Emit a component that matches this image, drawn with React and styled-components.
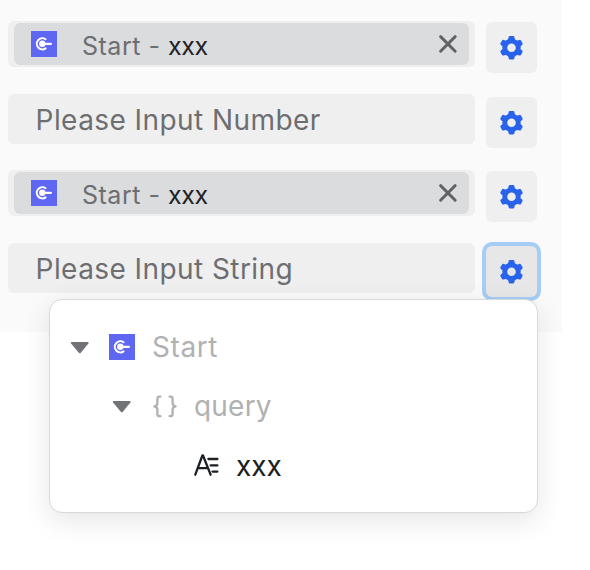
import React from "react";
import styled, { createGlobalStyle } from "styled-components";

const GlobalStyle = createGlobalStyle`
  * { box-sizing: border-box; }
  body {
    margin: 0;
    background: #fff;
    font-family: Inter, "Liberation Sans", sans-serif;
    overflow: hidden;
  }
`;

const Page = styled.main`
  position: relative;
  width: 590px;
  height: 570px;
  overflow: hidden;
`;

const Panel = styled.section`
  width: 562px;
  height: 332px;
  padding: 21px 0 0 8px;
  background: #fafafa;
`;

const Row = styled.div`
  display: flex;
  align-items: flex-start;
  gap: 11px;
  height: ${(p) => (p.$compact ? 73 : 76)}px;
`;

const Field = styled.div`
  display: flex;
  align-items: center;
  width: 467px;
  height: ${(p) => (p.$compact ? 46 : 50)}px;
  padding: ${(p) => (p.$compact ? "0 6px" : "2px 27.6px 0")};
  border-radius: 6px;
  background: #efefef;
`;

const Placeholder = styled.span`
  font-size: 28px;
  line-height: 48px;
  letter-spacing: 0.43px;
  color: #6d6e71;
  white-space: pre;
`;

const Tag = styled.div`
  display: flex;
  align-items: center;
  width: 455px;
  height: 42px;
  padding: 0 11px 0 17px;
  border-radius: 6px;
  background: #dbdcde;
`;

const TagText = styled.span`
  flex: 1;
  margin-left: 25px;
  padding-top: 3px;
  font-size: 25px;
  line-height: 40px;
  letter-spacing: 0.5px;
  color: #6d6e71;
  white-space: pre;
`;

const Strong = styled.span`
  letter-spacing: -0.4px;
  color: #1f2226;
`;

const SettingsButton = styled.button`
  display: flex;
  align-items: center;
  justify-content: center;
  width: 51px;
  height: 51px;
  margin: ${(p) => p.$offset}px 0 0;
  padding: 0;
  border: 0;
  border-radius: 6px;
  background: ${(p) => (p.$active ? "#e7e7e7" : "#efefef")};
  box-shadow: ${(p) => (p.$active ? "0 0 0 4px #a6cdf5" : "none")};
`;

const Popup = styled.div`
  position: absolute;
  left: 49px;
  top: 299px;
  width: 489px;
  height: 214px;
  padding: 17px 0 0 20px;
  border: 1px solid #d9d9d9;
  border-radius: 13px;
  background: #fff;
  box-shadow: 0 8px 28px rgba(0, 0, 0, 0.1);
`;

const TreeRow = styled.div`
  display: flex;
  align-items: center;
  height: 59.5px;
  padding-left: ${(p) => p.$indent}px;
`;

const TreeLabel = styled.span`
  margin-left: 17px;
  font-size: 28px;
  line-height: 40px;
  letter-spacing: ${(p) => p.$tracking}px;
  color: ${(p) => (p.$dark ? "#1c1f23" : "#b0b1b2")};
`;

const Glyph = styled.svg`
  display: block;
  flex: none;
  margin-left: ${(p) => p.$gap || 0}px;
`;

function StartIcon({ gap }) {
  return (
    <Glyph $gap={gap} width="26" height="26" viewBox="0 0 26 26">
      <path fill="#5f66f2" d="M0 0h26v26H0z" />
      <path d="M14.6 8.2A5.6 5.6 0 1 0 14.6 17.4" fill="none" stroke="#fff" strokeWidth="2" strokeLinecap="round" />
      <circle cx="11.3" cy="12.8" r="3.2" fill="#fff" />
      <path d="M12 12.8h7.9" stroke="#fff" strokeWidth="2.2" strokeLinecap="round" />
    </Glyph>
  );
}

function GearIcon() {
  return (
    <Glyph width="24" height="24" viewBox="-11.5 -11.7 24 24">
      <circle r="6.5" fill="none" stroke="#2963eb" strokeWidth="4.4" />
      {[0, 60, 120, 180, 240, 300].map((angle) => (
        <path
          key={angle}
          transform={`rotate(${angle})`}
          fill="#2963eb"
          d="M-5-7.5Q-3.5-7.9-3.2-9L-2.9-10.6Q-2.6-11.8-1.5-11.8H1.5Q2.6-11.8 2.9-10.6L3.2-9Q3.5-7.9 5-7.5L3-5.6H-3Z"
        />
      ))}
    </Glyph>
  );
}

function CloseIcon() {
  return (
    <Glyph width="20" height="20" viewBox="0 0 20 20">
      <path d="M2.6 2.6 17.2 17.2M17.2 2.6 2.6 17.2" stroke="#606266" strokeWidth="2.9" strokeLinecap="round" />
    </Glyph>
  );
}

function Caret() {
  return (
    <Glyph width="20" height="14" viewBox="0 -0.8 20 14">
      <path d="M1.6 1.2H17.8Q19.3 1.4 18.4 2.7L10.8 12Q9.8 13 8.8 12L1.1 2.7Q.2 1.4 1.6 1.2Z" fill="#727376" />
    </Glyph>
  );
}

function BracesIcon() {
  return (
    <Glyph $gap={21} width="24" height="24" viewBox="0 0 24 24">
      <path
        d="M7.4 2.6H6.4Q4.4 2.6 4.4 4.8V9Q4.4 11.9 1.4 12.4Q4.4 12.9 4.4 15.8V20Q4.4 22.2 6.4 22.2H7.4M16.6 2.6H17.6Q19.6 2.6 19.6 4.8V9Q19.6 11.9 22.6 12.4Q19.6 12.9 19.6 15.8V20Q19.6 22.2 17.6 22.2H16.6"
        fill="none"
        stroke="#b0b1b2"
        strokeWidth="2.3"
        strokeLinecap="round"
        strokeLinejoin="round"
      />
    </Glyph>
  );
}

function StringIcon() {
  return (
    <Glyph width="25" height="24" viewBox="0 0 25 24">
      <path
        d="M1.3 20.7 8.4 1.5H9L16.6 20.7M4 14.2H13.8M14.4 5H23.4M16.7 11.4H23.4M18.5 17.6H23.4"
        fill="none"
        stroke="#1c1f23"
        strokeWidth="2.3"
        strokeLinecap="round"
        strokeLinejoin="round"
      />
    </Glyph>
  );
}

function SelectedField() {
  return (
    <Field $compact>
      <Tag>
        <StartIcon />
        <TagText>
          Start - <Strong>xxx</Strong>
        </TagText>
        <CloseIcon />
      </Tag>
    </Field>
  );
}

function EmptyField({ text }) {
  return (
    <Field>
      <Placeholder>{text}</Placeholder>
    </Field>
  );
}

function Settings({ offset, active }) {
  return (
    <SettingsButton $offset={offset} $active={active} aria-label="Settings">
      <GearIcon />
    </SettingsButton>
  );
}

export default function App() {
  return (
    <Page>
      <GlobalStyle />
      <Panel>
        <Row $compact>
          <SelectedField />
          <Settings offset={1} />
        </Row>
        <Row>
          <EmptyField text="Please Input Number" />
          <Settings offset={3} />
        </Row>
        <Row $compact>
          <SelectedField />
          <Settings offset={1} />
        </Row>
        <Row>
          <EmptyField text="Please Input String" />
          <Settings offset={3} active />
        </Row>
      </Panel>
      <Popup>
        <TreeRow $indent={0}>
          <Caret />
          <StartIcon gap={19} />
          <TreeLabel $tracking={0.6}>Start</TreeLabel>
        </TreeRow>
        <TreeRow $indent={42}>
          <Caret />
          <BracesIcon />
          <TreeLabel $tracking={0.2}>query</TreeLabel>
        </TreeRow>
        <TreeRow $indent={124}>
          <StringIcon />
          <TreeLabel $tracking={0} $dark>xxx</TreeLabel>
        </TreeRow>
      </Popup>
    </Page>
  );
}
